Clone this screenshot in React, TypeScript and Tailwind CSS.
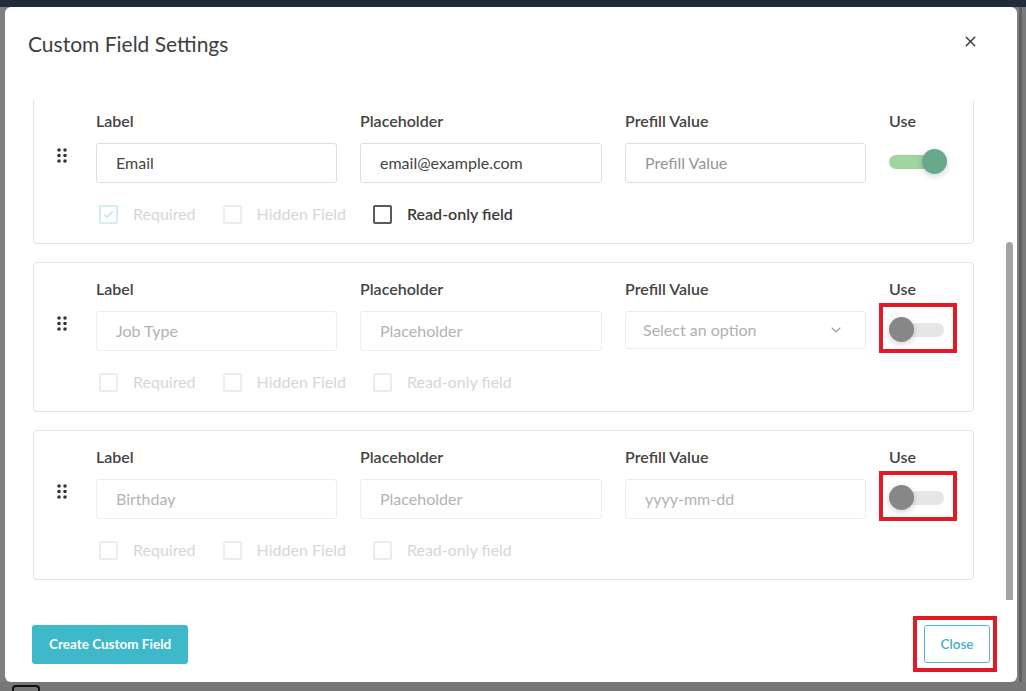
import { ChevronDown, X } from "lucide-react";

type FieldRow = {
  label: string;
  placeholder: string;
  prefill: string;
  kind: "input" | "select";
  enabled: boolean;
  flagged: boolean;
};

const rows: FieldRow[] = [
  { label: "Email", placeholder: "email@example.com", prefill: "Prefill Value", kind: "input", enabled: true, flagged: false },
  { label: "Job Type", placeholder: "Placeholder", prefill: "Select an option", kind: "select", enabled: false, flagged: true },
  { label: "Birthday", placeholder: "Placeholder", prefill: "yyyy-mm-dd", kind: "input", enabled: false, flagged: true },
];

function DragHandle() {
  return (
    <svg width="10" height="15" viewBox="0 0 10 15" fill="#333">
      <circle cx="2" cy="2" r="1.8" />
      <circle cx="8" cy="2" r="1.8" />
      <circle cx="2" cy="7.5" r="1.8" />
      <circle cx="8" cy="7.5" r="1.8" />
      <circle cx="2" cy="13" r="1.8" />
      <circle cx="8" cy="13" r="1.8" />
    </svg>
  );
}

function Toggle({ on, flagged }: { on: boolean; flagged: boolean }) {
  return (
    <div className="relative w-[57px] h-[26px] flex items-center">
      <div className={`w-[55px] h-[14px] rounded-full ${on ? "bg-[#a0d59f]" : "bg-[#e6e6e6]"}`} />
      <div
        className={`absolute top-0 w-[25px] h-[25px] rounded-full shadow-[0_2px_6px_rgba(0,0,0,0.18)] ${
          on ? "left-[33px] bg-[#68a98b]" : "left-0 bg-[#878787]"
        }`}
      />
      {/* annotation box */}
      {flagged && (
        <div className="absolute -left-[10px] -top-[14px] w-[78px] h-[50px] border-4 border-[#e11b26]" />
      )}
    </div>
  );
}

function Check({ label, state }: { label: string; state: "faded" | "checked" | "active" }) {
  const box =
    state === "active"
      ? "border-2 border-[#5a5a5a]"
      : state === "checked"
      ? "border-2 border-[#d3eef1]"
      : "border-2 border-[#ececec]";
  const text = state === "active" ? "text-[#3a3a3a] font-semibold" : "text-[#d6d6d6]";
  return (
    <div className="flex items-center mr-[27px]">
      <div className={`w-[19px] h-[19px] rounded-[2px] flex items-center justify-center ${box}`}>
        {state === "checked" && (
          <svg width="13" height="13" viewBox="0 0 24 24" fill="none" stroke="#bfe5ea" strokeWidth="3">
            <path d="M4 12l5 5L20 6" />
          </svg>
        )}
      </div>
      <span className={`ml-[15px] text-[16px] leading-[20px] ${text}`}>{label}</span>
    </div>
  );
}

function FieldCard({ row }: { row: FieldRow }) {
  const border = row.enabled ? "border-[#dedede]" : "border-[#ececec]";
  const valueColor = row.enabled ? "text-[#444]" : "text-[#b3b3b3]";
  const hintColor = row.enabled ? "text-[#959595]" : "text-[#b3b3b3]";

  return (
    <div className="flex border border-[#e3e3e3] rounded-[4px] bg-white pt-[16px] pb-[19px] shrink-0">
      <div className="w-[62px] pl-[23px] pt-[37px]">
        <DragHandle />
      </div>
      <div className="flex-1">
        <div className="grid grid-cols-[241px_242px_241px_1fr] gap-x-[23px]">
          <div>
            <div className="h-[20px] leading-[20px] mb-[12px] text-[16px] font-semibold text-[#444]">Label</div>
            <div className={`h-[40px] border ${border} rounded-[3px] flex items-center pl-[19px] text-[16px] ${valueColor}`}>
              {row.label}
            </div>
          </div>
          <div>
            <div className="h-[20px] leading-[20px] mb-[12px] text-[16px] font-semibold text-[#444]">Placeholder</div>
            <div className={`h-[40px] border ${border} rounded-[3px] flex items-center pl-[19px] text-[16px] ${valueColor}`}>
              {row.placeholder}
            </div>
          </div>
          <div>
            <div className="h-[20px] leading-[20px] mb-[12px] text-[16px] font-semibold text-[#444]">Prefill Value</div>
            {row.kind === "select" ? (
              <div className={`h-[38px] border ${border} rounded-[3px] flex items-center justify-between pl-[17px] pr-[21px] text-[16px] text-[#b0b0b0]`}>
                {row.prefill}
                <ChevronDown size={16} color="#a0a0a0" strokeWidth={1.75} />
              </div>
            ) : (
              <div className={`h-[40px] border ${border} rounded-[3px] flex items-center pl-[19px] text-[16px] ${hintColor}`}>
                {row.prefill}
              </div>
            )}
          </div>
          <div>
            <div className="h-[20px] leading-[20px] mb-[12px] text-[16px] font-semibold text-[#444]">Use</div>
            <div className="h-[38px] flex items-center">
              <Toggle on={row.enabled} flagged={row.flagged} />
            </div>
          </div>
        </div>
        <div className="flex items-center h-[20px] mt-[21px] pl-[3px]">
          <Check label="Required" state={row.enabled ? "checked" : "faded"} />
          <Check label="Hidden Field" state="faded" />
          <Check label="Read-only field" state={row.enabled ? "active" : "faded"} />
        </div>
      </div>
    </div>
  );
}

export default function App() {
  return (
    <div className="w-[1026px] h-[691px] bg-[#7c7c7c] flex flex-col overflow-hidden font-['Lato',sans-serif]">
      <div className="h-[7px] bg-[#212b3c] shrink-0" />
      <div className="flex h-[675px] shrink-0">
        <div className="w-[5px] bg-[#7f7f7f]" />
        {/* Modal */}
        <div className="w-[1012px] bg-white rounded-[6px] flex flex-col overflow-hidden">
          {/* Header */}
          <div className="h-[93px] shrink-0 flex items-start justify-between pl-[23px] pr-[38px] pt-[23px]">
            <h2 className="text-[21px] leading-[28px] text-[#3e3e3e]">Custom Field Settings</h2>
            <X size={17} color="#3a3a3a" strokeWidth={2} className="mt-[3px]" />
          </div>

          {/* Body */}
          <div className="h-[503px] shrink-0 flex">
            <div className="w-[969px] pl-[28px] overflow-hidden">
              <div className="flex flex-col gap-[18px] -mt-[6px]">
                {rows.map((r) => (
                  <FieldCard key={r.label} row={r} />
                ))}
              </div>
            </div>
            <div className="flex-1" />
            <div className="w-[7px] mr-[4px] mt-[142px] h-[358px] bg-[#a3a3a3] rounded-t-[4px]" />
          </div>

          {/* Footer */}
          <div className="h-[79px] shrink-0 flex items-center justify-between pl-[27px] pr-[20px] pt-[3px]">
            <button className="h-[39px] px-[17px] rounded-[3px] bg-[#3db9ca] text-white text-[13.5px] font-bold">
              Create Custom Field
            </button>
            <div className="w-[84px] h-[56px] border-4 border-[#e11b26] flex items-center pl-[7px]">
              <button className="w-[66px] h-[38px] rounded-[3px] border border-[#4ab7c6] bg-white text-[#3fb1c1] text-[13.5px] font-semibold">
                Close
              </button>
            </div>
          </div>
        </div>
        <div className="flex-1 flex">
          <div className="w-[2px] bg-[#7f7f7f]" />
          <div className="w-[3px] bg-[#606060]" />
          <div className="flex-1 bg-[#7a7a7a]" />
        </div>
      </div>
      <div className="flex-1 bg-[#777]">
        <div className="ml-[12px] mt-[3px] w-[28px] h-[10px] border-2 border-b-0 border-[#111] rounded-t-[4px]" />
      </div>
    </div>
  );
}
